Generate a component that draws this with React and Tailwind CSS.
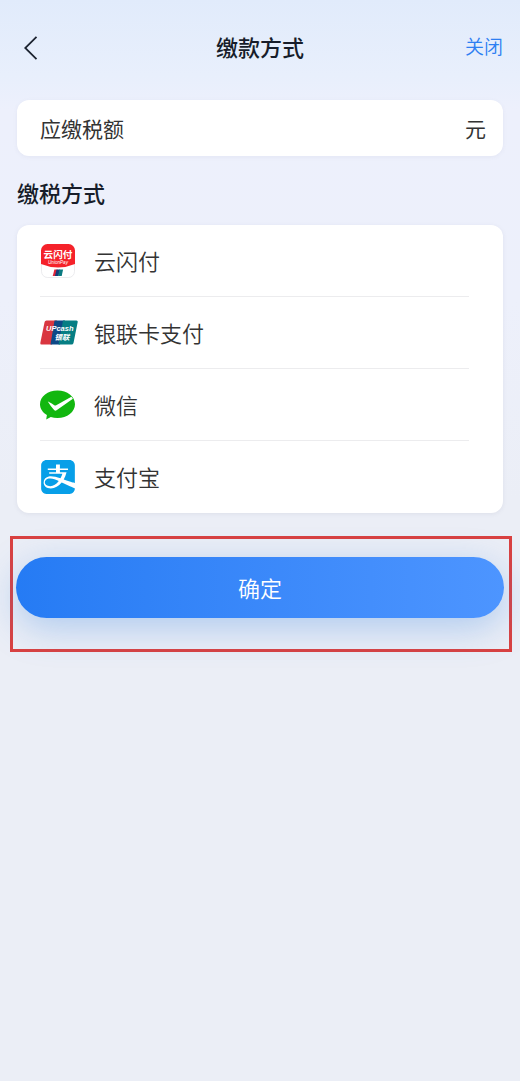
import { SiAlipay } from 'react-icons/si';

function UnionPayAppIcon() {
  return (
    <svg viewBox="-1 0 36 34" className="h-[34px] w-9" aria-hidden="true">
      <rect x="0.5" y="0.5" width="33" height="33" rx="6" fill="#fff" stroke="#e4e4e6" strokeWidth="0.7" />
      <path d="M0 20V6.500A6.500 6.500 0 0 1 6.500 0h21A6.500 6.500 0 0 1 34 6.500V20Q17 27 0 20Z" fill="#f5222a" />
      <text x="17" y="14" textAnchor="middle" fontSize="9.600" fontWeight="700" fill="#fff">云闪付</text>
      <text x="17" y="20" textAnchor="middle" fontSize="4.600" fontStyle="italic" fill="#fff" fontFamily="Liberation Sans, sans-serif">UnionPay</text>
      <path d="M13.400 25.500h3.200L14.900 32h-3.200Z" fill="#e0253a" />
      <path d="M15.600 25.500h3.600L17.500 32h-3.600Z" fill="#153e78" />
      <path d="M18.500 25.500h3.600L20.700 32h-3.600Z" fill="#0a7a80" />
    </svg>
  );
}

function UnionPayCardIcon() {
  return (
    <svg viewBox="0 0 38 25" className="h-[25px] w-[38px]" aria-hidden="true">
      <path d="M6.500 0.500H17L12 24.500H1.500Q0 24.500 0.300 23L4.600 2Q5 0.500 6.500 0.500Z" fill="#d93640" />
      <path d="M14.500 0.500H25L20 24.500H10.500Z" fill="#0e4886" />
      <path d="M23 0.500H36.500Q38 0.500 37.700 2L33.500 23Q33.100 24.500 31.600 24.500H18.500Z" fill="#067e83" />
      <text x="6" y="11" fontSize="7.500" fontWeight="700" fontStyle="italic" fill="#fff" fontFamily="Liberation Sans, sans-serif">UPcash</text>
      <text x="14.500" y="20" fontSize="7.500" fontWeight="700" fontStyle="italic" fill="#fff">银联</text>
    </svg>
  );
}

function WeChatPayIcon() {
  return (
    <svg viewBox="0 0 35 30" className="h-[30px] w-[35px]" aria-hidden="true">
      <path d="M17.500 0.500C27.200 0.500 35 6.600 35 14.200S27.200 28 17.500 28C15.100 28 12.800 27.600 10.800 26.900L6.200 29.500L6.900 25C2.700 22.500 0 18.600 0 14.200C0 6.600 7.800 0.500 17.500 0.500Z" fill="#12b70f" />
      <path d="M7.800 11.600Q8.700 11.600 14.300 15.300Q15.200 15.800 16.200 15.300L31.400 6.700L32.900 8.800L16.600 20.300Q15.200 21.200 14.100 19.900Q10.300 16 7.800 11.600Z" fill="#fff" />
    </svg>
  );
}

const methods = [
  { name: '云闪付', icon: <UnionPayAppIcon /> },
  { name: '银联卡支付', icon: <UnionPayCardIcon /> },
  { name: '微信', icon: <WeChatPayIcon /> },
  { name: '支付宝', icon: <SiAlipay className="box-content h-[34px] w-[34px] px-px text-[#079fe8]" aria-hidden="true" /> },
];

export default function App() {
  return (
    <div className="min-h-screen bg-[#ebeef6] bg-[linear-gradient(180deg,#e1ebfb_0px,#e8effc_75px,#edf0fc_110px,#edf0fb_300px,#ebeef6_500px)] font-['Noto_Sans_CJK_SC','Noto_Sans',sans-serif] text-[#333]">
      <header className="grid h-[100px] grid-cols-3 items-center px-[17px] pb-1">
        <button type="button" aria-label="返回" className="justify-self-start p-[7px]">
          <svg viewBox="0 0 14 24" className="h-6 w-[14px]" fill="none" stroke="#1c2330" strokeWidth="1.800" aria-hidden="true">
            <path d="M12.500 0.800L1.200 12L12.500 23.200" />
          </svg>
        </button>
        <h1 className="justify-self-center pb-1 text-[22px] leading-8 font-medium text-[#171d2a]">缴款方式</h1>
        <button type="button" className="justify-self-end pb-1 text-[19px] leading-8 font-[350] text-[#2e7ff2]">关闭</button>
      </header>

      <main>
        <div className="mx-[17px] flex h-14 items-center justify-between rounded-xl bg-white pr-[17px] pl-[23px] text-[21px] leading-8 shadow-[0_1px_4px_rgba(120,120,150,0.08)]">
          <span>应缴税额</span>
          <span>元</span>
        </div>

        <h2 className="mx-[17px] pt-5 pb-[17px] text-[22px] leading-8 font-medium text-[#171d2a]">缴税方式</h2>

        <ul className="mx-[17px] rounded-xl bg-white pr-[34px] pl-[23px] shadow-[0_1px_4px_rgba(120,120,150,0.12)]">
          {methods.map((method) => (
            <li key={method.name} className="h-[72px] border-b border-[#ececee] last:border-b-0">
              <button type="button" className="flex h-full w-full items-center text-left">
                <span className="w-[38px]">{method.icon}</span>
                <span className="pb-0.5 pl-4 text-[22px] leading-8 font-[350]">{method.name}</span>
              </button>
            </li>
          ))}
        </ul>

        <div className="mt-[23px] mr-2 ml-[10px] border-[3px] border-[#d94141] pt-[18px] pr-[5px] pb-[31px] pl-[3px]">
          <button type="button" className="h-[61px] w-full rounded-full bg-linear-to-r from-[#257bf4] to-[#4d95ff] text-[22px] font-[350] text-white shadow-[0_10px_36px_rgba(60,135,225,0.34)]">
            确定
          </button>
        </div>
      </main>
    </div>
  );
}
